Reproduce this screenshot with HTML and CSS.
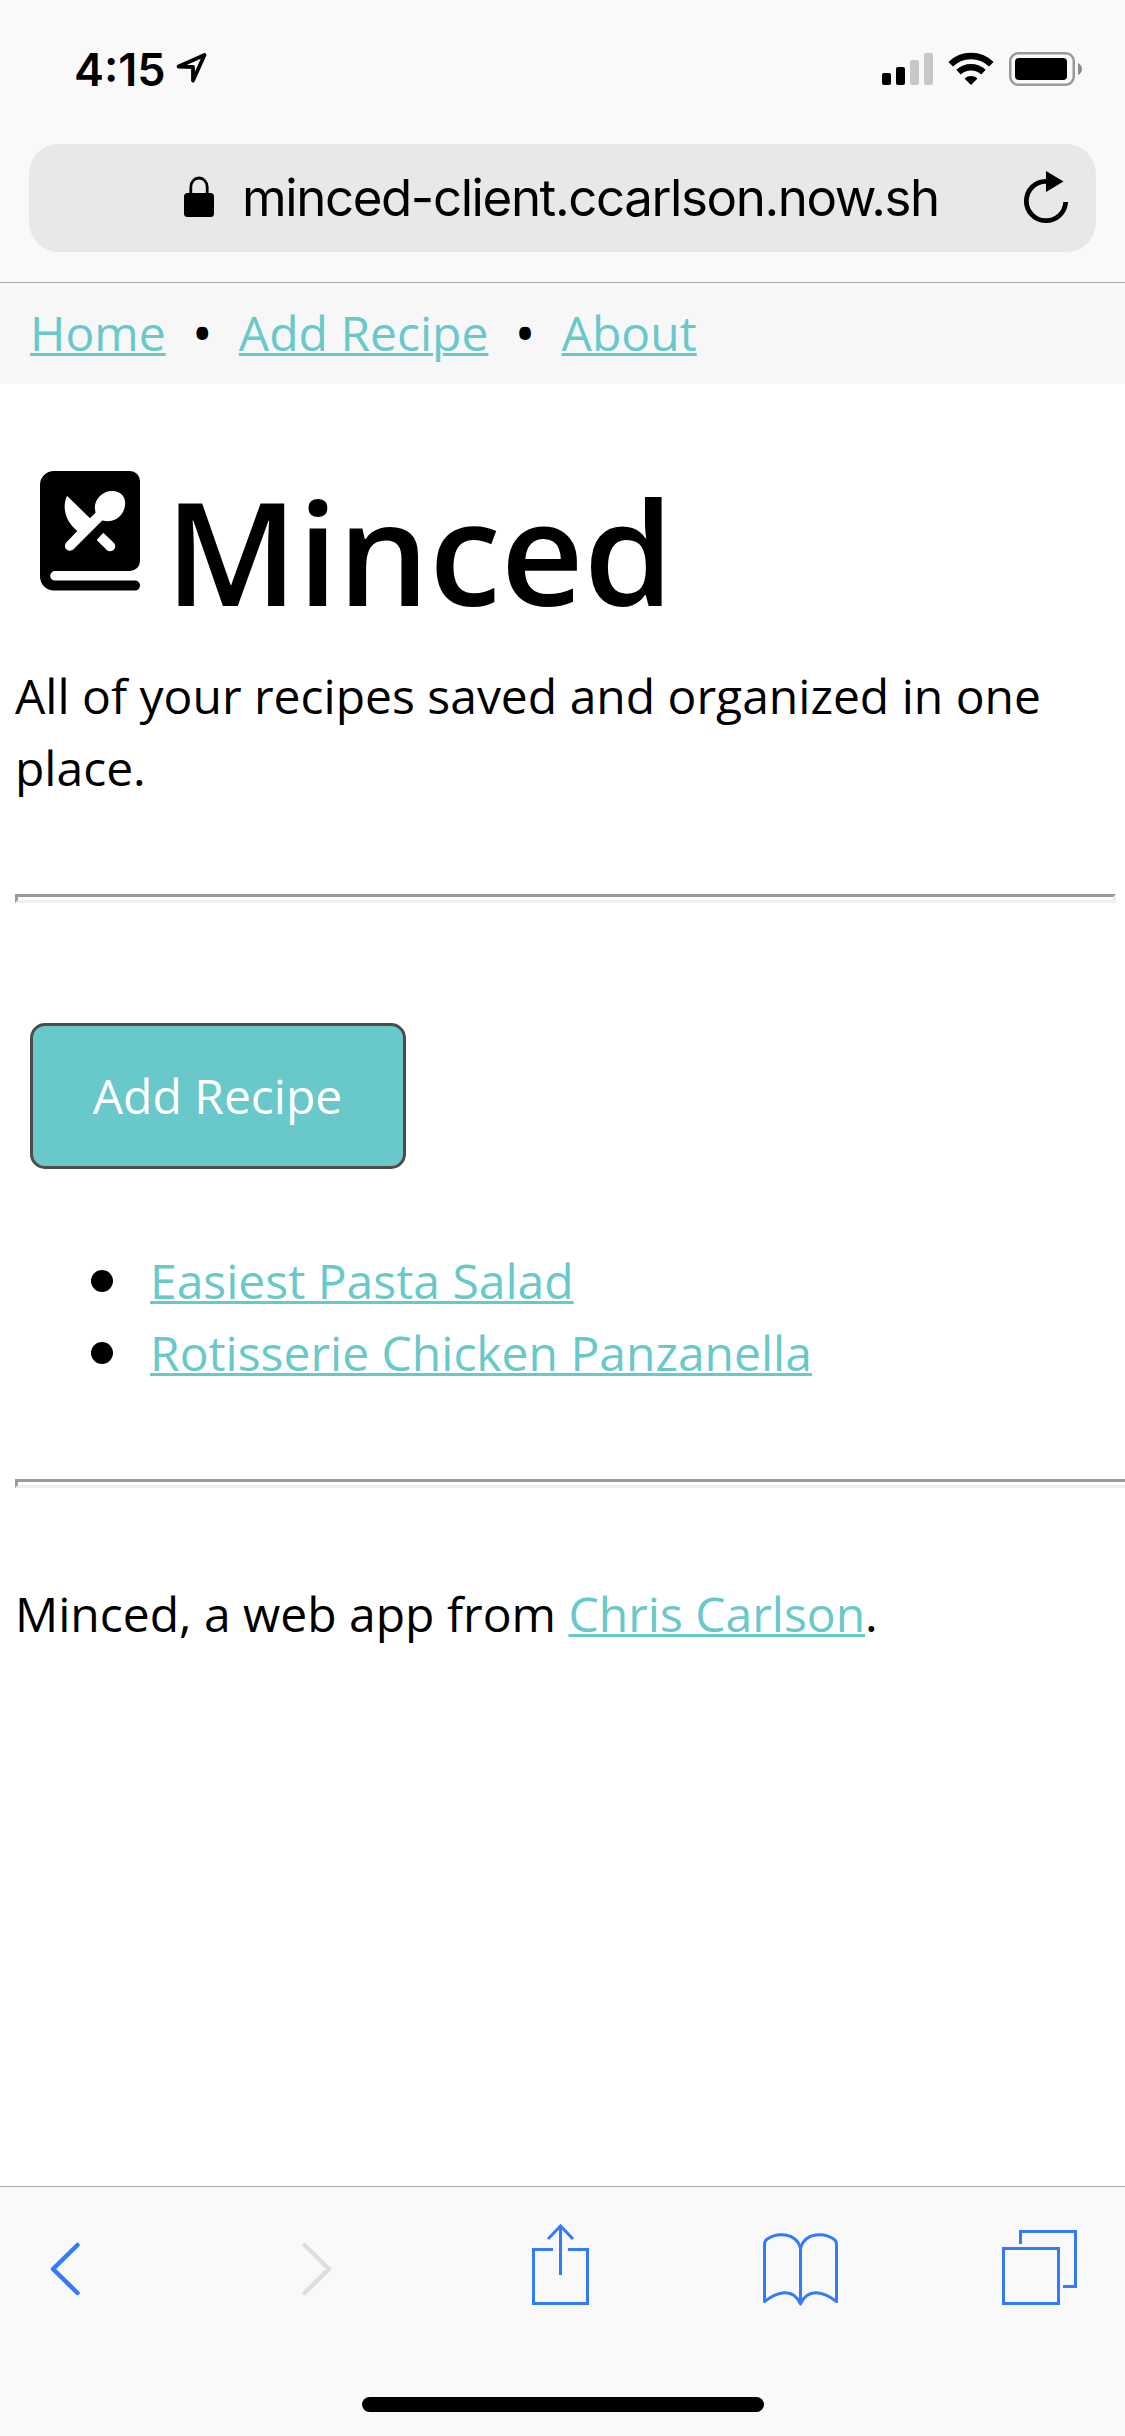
FILE: index.html
```html
<!DOCTYPE html>
<html lang="en">
<head>
<meta charset="utf-8">
<title>Minced</title>
<link rel="stylesheet" href="styles.css">
</head>
<body>
<div class="screen">
  <header class="chrome">
    <div class="status">
      <div class="status-left">
        <span class="time">4:15</span>
        <svg class="location" width="32" height="32" viewBox="0 0 32 32"><path d="M2.500 15.500 28.500 4 17 29.500V16z" fill="none" stroke="#000" stroke-width="3.800" stroke-linejoin="round"/></svg>
      </div>
      <svg class="indicators" width="202" height="36" viewBox="881 51 202 36">
        <rect x="882" y="73" width="9" height="12" rx="2"/>
        <rect x="896" y="67" width="9" height="18" rx="2"/>
        <rect x="910" y="60" width="9" height="25" rx="2" fill="#c7c7c7"/>
        <rect x="924" y="53" width="9" height="32" rx="2" fill="#c7c7c7"/>
        <g fill="none" stroke="#000" stroke-width="6.500"><path d="M950.700 64.200a29 29 0 0 1 40.600 0"/><path d="M958.500 72.200a18.500 18.500 0 0 1 25 0"/></g>
        <path d="M964.500 78.500a10 10 0 0 1 13 0L971 85z"/>
        <rect x="1010.250" y="53.250" width="63.500" height="31.500" rx="8" fill="none" stroke="#999" stroke-width="2.500"/>
        <rect x="1015" y="58" width="52" height="22" rx="4"/>
        <path d="M1078 63q4 2 4 6t-4 6z" fill="#8c8c8c"/>
      </svg>
    </div>
    <div class="address">
      <svg class="lock" width="30" height="42" viewBox="0 0 30 42"><rect y="17" width="30" height="24" rx="3.500"/><path d="M6.800 19V11a8.200 9 0 0 1 16.400 0v8" fill="none" stroke="#000" stroke-width="2.800"/></svg>
      <span class="url">minced-client.ccarlson.now.sh</span>
      <svg class="reload" width="46" height="54" viewBox="1023 171 46 54"><path d="M1047 182.300h-1a19.700 19.700 0 1 0 19.700 20.700" fill="none" stroke="#000" stroke-width="4.800"/><path d="M1046 172l17.500 10.500L1046 193z"/></svg>
    </div>
  </header>

  <main class="page">
    <nav class="nav"><a href="#">Home</a><span class="dot">•</span><a href="#">Add Recipe</a><span class="dot">•</span><a href="#">About</a></nav>
    <div class="title">
      <svg class="logo" width="100" height="120" viewBox="0 0 100 120">
        <path d="M14 0H90a10 10 0 0 1 10 10V90a10 10 0 0 1-10 10H15a4.800 4.800 0 0 0 0 9.600H95a5 5 0 0 1 0 10H14A14 14 0 0 1 0 105.600V14A14 14 0 0 1 14 0z"/>
        <path fill="#fff" d="M27 24.700 50 47.300 55.700 41.500C52 31 61 20 72 20C82 20 86 27 85 34.500C83.500 46 73 52.500 62.300 49.500L33.500 78.300C28.500 82.500 22 76.500 26.500 71.300L37.300 60C26 51 21.500 37 27 24.700z"/>
        <path fill="#fff" d="M63.300 61.700 74 72C78 77 71.500 82.500 67 79.300L56.700 69z"/>
      </svg>
      <h1>Minced</h1>
    </div>
    <p class="tagline">All of your recipes saved and organized in one place.</p>
    <hr class="rule">
    <button class="add">Add Recipe</button>
    <ul class="recipes">
      <li><a href="#">Easiest Pasta Salad</a></li>
      <li><a href="#">Rotisserie Chicken Panzanella</a></li>
    </ul>
    <hr class="rule rule-wide">
    <p class="credit">Minced, a web app from <a href="#">Chris Carlson</a>.</p>
  </main>

  <footer class="toolbar">
    <div class="tools">
      <svg class="back" width="30" height="84" viewBox="50 2224 30 84"><path class="thick" d="M77.500 2245 53 2269l24.500 24"/></svg>
      <svg class="forward" width="30" height="84" viewBox="302 2224 30 84"><path class="thick off" d="M304.500 2245 329 2269l-24.500 24"/></svg>
      <svg class="share" width="58" height="84" viewBox="532 2224 58 84"><path d="M553 2249.500H533.500v54h54v-54H568M560.500 2275v-48M548 2239l12.500-13 12.500 13"/></svg>
      <svg class="bookmarks" width="76" height="84" viewBox="763 2224 76 84"><path stroke-linejoin="round" d="M800.500 2304V2248C796 2232 776 2232 766 2240Q764.500 2242 764.500 2245V2301.500C777 2292 793 2287 800.500 2304C808 2287 824 2292 836.500 2301.500V2245Q836.500 2242 835 2240C825 2232 805 2232 800.500 2248"/></svg>
      <svg class="tabs" width="76" height="84" viewBox="1002 2224 76 84"><path d="M1003.500 2248.500h55v55h-55zM1020.500 2244v-12.500h55v55H1063"/></svg>
    </div>
    <div class="home-bar"></div>
  </footer>
</div>
</body>
</html>
```
FILE: styles.css
```css
* { box-sizing: border-box; }
body { margin: 0; background: #fff; color: #000; font-family: "Open Sans", sans-serif; font-size: 48px; line-height: 72px; }
.screen { width: 1125px; height: 2436px; display: flex; flex-direction: column; overflow: hidden; }
svg { display: block; flex: none; }

.chrome { flex: none; height: 283px; background: #f9f9f9; border-bottom: 1px solid #ababab; font-family: Inter, sans-serif; }
.status { height: 144px; padding: 51px 42px 0 74px; display: flex; justify-content: space-between; align-items: flex-start; }
.status-left { display: flex; gap: 10px; }
.time { width: 92px; font-size: 45px; font-weight: 600; line-height: 37px; white-space: nowrap; }
.address { height: 108px; margin: 0 29px; padding: 0 27px 0 155px; display: flex; align-items: center; background: #e8e8e8; border-radius: 30px; }
.lock { margin-top: -2px; }
.url { flex: 1; margin-left: 28px; font-size: 51px; letter-spacing: -1.400px; white-space: nowrap; }
.reload { margin-top: -2px; }

.page { flex: 1; }
a { color: #69c8c9; text-decoration-thickness: 3px; }
.nav { height: 101px; padding: 14px 30px 0; display: flex; gap: 27.600px; background: #f7f7f7; }
.dot { width: 18px; display: flex; justify-content: center; font-weight: 600; }
.title { height: 253px; display: flex; align-items: flex-start; padding: 87px 0 0 40px; }
.logo { margin-right: 25px; }
h1 { margin: 0; font-size: 144px; font-weight: 600; line-height: 158px; }
.tagline { margin: 23px 15px 0; }
.rule { margin: 0 9px 0 15px; height: 9px; border: 3px solid; border-color: #9a9a9a #eee #eee #9a9a9a; }
.tagline + .rule { margin-top: 90px; }
.add { display: block; width: 376px; height: 146px; margin: 120px 0 0 30px; padding: 0 1px 0 0; font: inherit; color: #fff; background: #69c8c9; border: 3px solid #4c4c4c; border-radius: 15px; }
.recipes { margin: 76px 0 0; padding: 0 0 0 150px; list-style: none; }
.recipes li { display: flex; align-items: center; margin-left: -59px; }
.recipes li::before { content: ""; width: 22px; height: 22px; margin-right: 37px; border-radius: 50%; background: #000; }
.rule-wide { margin: 90px -15px 0 15px; }
.credit { margin: 90px 15px 0; }

.toolbar { flex: none; height: 250px; background: #f9f9f9; border-top: 1px solid #ababab; }
.tools { padding: 37px 0 0 50px; display: flex; }
.tools path { fill: none; stroke: #347bf7; stroke-width: 3; }
.tools .thick { stroke-width: 4.500; stroke-linecap: round; stroke-linejoin: round; }
.tools .off { stroke: #dedede; }
.forward { margin-left: 222px; }
.share { margin-left: 200px; }
.bookmarks { margin-left: 173px; }
.tabs { margin-left: 163px; }
.home-bar { width: 402px; height: 15px; margin: 89px auto 0; border-radius: 8px; background: #000; }
```
